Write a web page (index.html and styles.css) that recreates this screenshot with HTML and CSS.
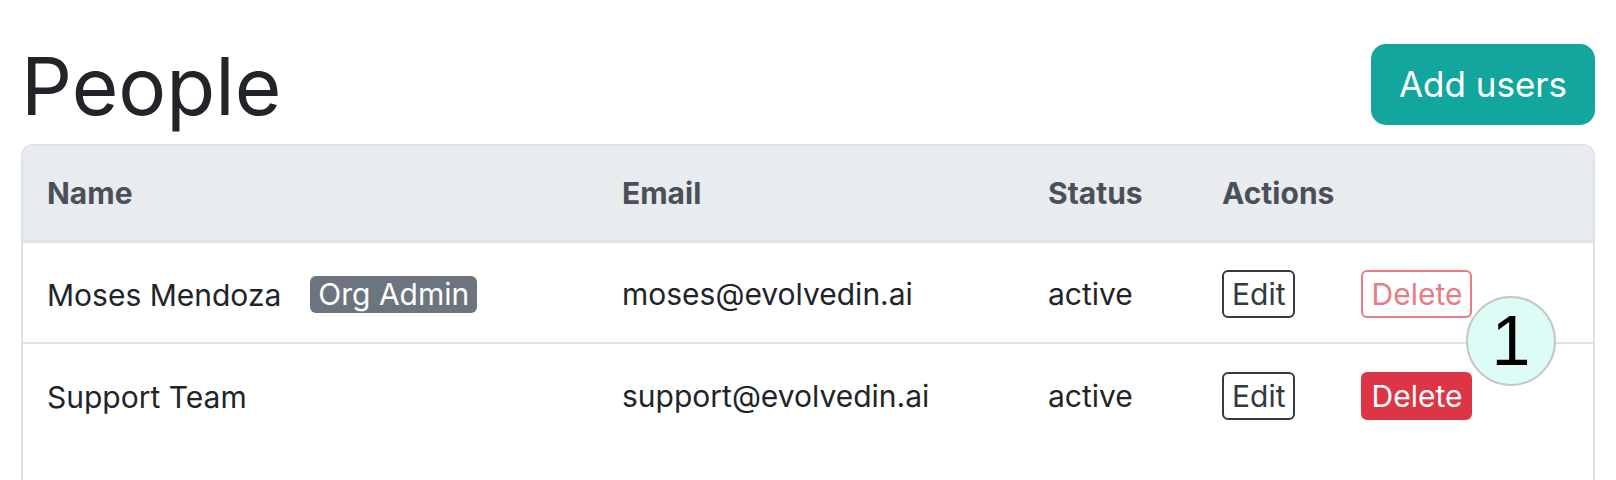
FILE: index.html
```html
<!DOCTYPE html>
<html lang="en">
<head>
<meta charset="utf-8">
<title>People</title>
<link rel="stylesheet" href="styles.css">
</head>
<body>
<div class="page">
  <div class="topbar">
    <h1 class="title">People</h1>
    <button class="btn-add" type="button">Add users</button>
  </div>
  <div class="card">
    <table class="people">
      <colgroup>
        <col class="c-name">
        <col class="c-email">
        <col class="c-status">
        <col class="c-actions">
      </colgroup>
      <thead>
        <tr>
          <th>Name</th>
          <th>Email</th>
          <th>Status</th>
          <th>Actions</th>
        </tr>
      </thead>
      <tbody>
        <tr>
          <td><span class="name">Moses Mendoza</span><span class="badge">Org Admin</span></td>
          <td>moses@evolvedin.ai</td>
          <td>active</td>
          <td><div class="actions"><button class="btn btn-edit" type="button">Edit</button><button class="btn btn-del-outline" type="button" disabled>Delete</button></div></td>
        </tr>
        <tr>
          <td><span class="name">Support Team</span></td>
          <td>support@evolvedin.ai</td>
          <td>active</td>
          <td><div class="actions"><button class="btn btn-edit" type="button">Edit</button><button class="btn btn-del" type="button">Delete</button></div></td>
        </tr>
      </tbody>
    </table>
  </div>
</div>
<div class="marker">1</div>
</body>
</html>
```
FILE: styles.css
```css
html, body {
  margin: 0;
  padding: 0;
  height: 480px;
  overflow: hidden;
  background: #ffffff;
}
body {
  font-family: Inter, "Noto Sans", sans-serif;
  color: #212529;
  font-size: 30px;
}
.page {
  padding: 38px 21px 0 21px;
}
.topbar {
  display: flex;
  justify-content: space-between;
  align-items: center;
  height: 96px;
}
.title {
  margin: 0;
  font-size: 80px;
  font-weight: 400;
  line-height: 96px;
  color: #212529;
}
.btn-add {
  font-family: Inter, "Noto Sans", sans-serif;
  font-size: 35px;
  height: 81px;
  padding: 0 28px;
  border: none;
  border-radius: 15px;
  background: #13a69e;
  color: #ffffff;
  margin-top: -4px;
}
.card {
  margin-top: 10px;
  border: 2px solid #dee2e6;
  border-radius: 12px;
  overflow: hidden;
  height: 360px;
}
.people {
  width: 100%;
  border-collapse: collapse;
  table-layout: fixed;
}
.c-name { width: 575px; }
.c-email { width: 426px; }
.c-status { width: 174px; }
.people th {
  background: #e9ecef;
  color: #495057;
  font-weight: 700;
  text-align: left;
  height: 94px;
  padding: 0 24px;
  border-bottom: 3px solid #dee2e6;
}
.people td {
  height: 97px;
  padding: 2px 24px 0 24px;
  border-bottom: 2px solid #dee2e6;
  vertical-align: middle;
  white-space: nowrap;
}
.people tbody tr:last-child td {
  border-bottom: none;
  padding-top: 3px;
}
.name {
  display: inline-block;
  vertical-align: middle;
}
.badge {
  display: inline-block;
  vertical-align: middle;
  margin-left: 29px;
  background: #6c757d;
  color: #ffffff;
  border-radius: 6px;
  padding: 0 8px;
  height: 37px;
  line-height: 37px;
}
.actions {
  display: flex;
  align-items: center;
  gap: 66px;
}
.btn {
  font-family: Inter, "Noto Sans", sans-serif;
  font-size: 30px;
  height: 48px;
  padding: 0 8px;
  border-radius: 6px;
  border: 2px solid transparent;
  background: transparent;
  line-height: 1;
}
.btn-edit {
  border-color: #343a40;
  color: #343a40;
}
.btn-del-outline {
  border-color: #dc3545;
  color: #dc3545;
  opacity: 0.65;
}
.btn-del {
  background: #dc3545;
  border-color: #dc3545;
  color: #ffffff;
}
.marker {
  position: absolute;
  left: 1466px;
  top: 296px;
  width: 86px;
  height: 86px;
  border: 2px solid #c2c8c6;
  border-radius: 50%;
  background: #dcfcf5;
  color: #000000;
  font-family: "Liberation Sans", Arial, sans-serif;
  font-size: 70px;
  display: flex;
  align-items: center;
  justify-content: center;
}
```
